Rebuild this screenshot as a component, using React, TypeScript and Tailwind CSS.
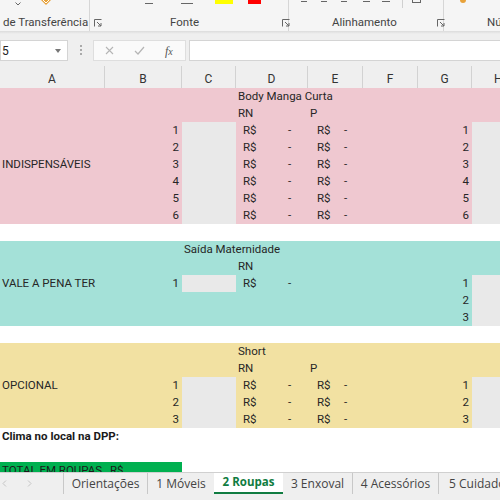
import type { ReactNode } from "react";

type Cell = { t?: ReactNode; right?: boolean; gray?: boolean };
type RowDef = Record<number, Cell>;

const cols = "grid grid-cols-[105px_77px_54px_72px_55px_55px_54px_1fr]";
const font = { fontFamily: "Roboto, 'Liberation Sans', sans-serif" };

function MoneyD() {
  return (
    <span className="flex pl-[5px]">
      <span className="w-[45px]">R$</span>
      <span>-</span>
    </span>
  );
}

function MoneyE() {
  return (
    <span className="flex pl-[7px]">
      <span className="w-[27px]">R$</span>
      <span>-</span>
    </span>
  );
}

function SheetRow({ row, bg }: { row: RowDef; bg: string }) {
  return (
    <div className={`${cols} h-[17px] ${bg}`}>
      {Array.from({ length: 8 }).map((_, i) => {
        const c = row[i] ?? {};
        return (
          <div
            key={i}
            className={`flex h-[17px] items-center whitespace-nowrap text-[11.5px] leading-none text-[#262626] ${
              c.right ? "justify-end pr-[3px]" : "pl-[2px]"
            } ${c.gray ? "bg-[#e9e9e9]" : ""}`}
          >
            {c.t}
          </div>
        );
      })}
    </div>
  );
}

function itemRow(n: number, label?: string, withE = true): RowDef {
  return {
    0: { t: label },
    1: { t: n, right: true },
    2: { gray: true },
    3: { t: <MoneyD /> },
    4: withE ? { t: <MoneyE /> } : {},
    6: { t: n, right: true },
    7: { gray: true },
  };
}

const pink: RowDef[] = [
  { 3: { t: "Body Manga Curta" } },
  { 3: { t: "RN" }, 4: { t: "P" } },
  itemRow(1),
  itemRow(2),
  itemRow(3, "INDISPENSÁVEIS"),
  itemRow(4),
  itemRow(5),
  itemRow(6),
];

const teal: RowDef[] = [
  { 2: { t: "Saída Maternidade" } },
  { 3: { t: "RN" } },
  itemRow(1, "VALE A PENA TER", false),
  { 6: { t: 2, right: true }, 7: { gray: true } },
  { 6: { t: 3, right: true }, 7: { gray: true } },
];

const yellow: RowDef[] = [
  { 3: { t: "Short" } },
  { 3: { t: "RN" }, 4: { t: "P" } },
  itemRow(1, "OPCIONAL"),
  itemRow(2),
  itemRow(3),
];

function Launcher() {
  return (
    <svg width="8" height="8" viewBox="0 0 8 8" className="text-[#666]">
      <path d="M0.5 7.5V0.5H7.5" fill="none" stroke="currentColor" strokeWidth="1" />
      <path d="M3 3L7 7M7 4V7H4" fill="none" stroke="currentColor" strokeWidth="1" />
    </svg>
  );
}

function Ribbon() {
  return (
    <div className="h-[31px] overflow-hidden bg-[#f5f5f5]" style={font}>
      <div className="flex h-full">
        <div className="flex w-[90px] shrink-0 flex-col border-r border-[#d6d6d6]">
          <div className="flex h-[18px] items-start">
            <svg width="6" height="4" viewBox="0 0 6 4" className="ml-[15px] mt-[2px]">
              <path d="M0.5 0.5L3 3L5.5 0.5" fill="none" stroke="#666" />
            </svg>
            <svg width="12" height="7" viewBox="0 0 12 7" className="ml-[19px]">
              <path d="M1 0L6 5L11 0Z" fill="#e8a23a" />
              <path d="M3 0L6 3L9 0" fill="none" stroke="#fff" strokeWidth="1" />
            </svg>
          </div>
          <div className="flex items-center whitespace-nowrap pl-[3px] text-[11.5px] text-[#444]">
            <span>de Transferência</span>
            <span className="ml-[6px] mt-[2px]">
              <Launcher />
            </span>
          </div>
        </div>
        <div className="flex w-[199px] shrink-0 flex-col border-r border-[#d6d6d6]">
          <div className="flex h-[18px] items-start">
            <div className="ml-[55px] mt-[3px] h-px w-[8px] bg-[#666]" />
            <div className="ml-[28px] mt-[3px] h-px w-[12px] bg-[#666]" />
            <div className="ml-[22px] h-[4px] w-[18px] bg-[#ffff00]" />
            <div className="ml-[15px] h-[4px] w-[13px] bg-[#ff0000]" />
          </div>
          <div className="flex items-center text-[11.5px] text-[#444]">
            <span className="ml-[80px]">Fonte</span>
            <span className="ml-[83px] mt-[2px]">
              <Launcher />
            </span>
          </div>
        </div>
        <div className="flex w-[155px] shrink-0 flex-col border-r border-[#d6d6d6]">
          <div className="flex h-[18px] items-start">
            <div className="ml-[12px] mt-[1px] h-px w-[6px] bg-[#666]" />
            <div className="ml-[14px] mt-[1px] h-px w-[6px] bg-[#666]" />
            <div className="ml-[14px] mt-[1px] h-px w-[6px] bg-[#666]" />
            <div className="ml-[16px] mt-[1px] h-px w-[7px] bg-[#666]" />
            <div className="ml-[12px] mt-[1px] h-px w-[8px] bg-[#666]" />
            <div className="ml-[12px] h-[8px] w-px bg-[#d0d0d0]" />
            <div className="ml-[9px] h-[3px] w-[9px] border border-t-0 border-[#666]" />
          </div>
          <div className="flex items-center text-[11.5px] text-[#444]">
            <span className="ml-[43px]">Alinhamento</span>
            <span className="ml-[40px] mt-[2px]">
              <Launcher />
            </span>
          </div>
        </div>
        <div className="flex flex-1 flex-col">
          <div className="flex h-[18px] items-start">
            <div className="ml-[16px] h-[3px] w-[6px] rounded-b-sm bg-[#e8a23a]" />
          </div>
          <div className="whitespace-nowrap pl-[43px] text-[11.5px] text-[#444]">Nú</div>
        </div>
      </div>
    </div>
  );
}

function FormulaBar() {
  return (
    <div className="flex h-[32px] items-start bg-[#efefef] pt-[6px]" style={font}>
      <div className="flex h-[21px] w-[68px] items-center justify-between border border-[#d4d4d4] bg-white pl-[1px] pr-[6px] text-[12px] text-[#222]">
        <span>5</span>
        <svg width="6" height="4" viewBox="0 0 6 4">
          <path d="M0 0H6L3 4Z" fill="#777" />
        </svg>
      </div>
      <div className="ml-[12px] mt-[5px] flex flex-col gap-[2px]">
        <div className="h-[2px] w-[2px] bg-[#aaa]" />
        <div className="h-[2px] w-[2px] bg-[#aaa]" />
        <div className="h-[2px] w-[2px] bg-[#aaa]" />
      </div>
      <div className="ml-[11px] flex h-[21px] w-[93px] items-center border border-[#dedede] bg-[#fafafa] text-[#aaa]">
        <svg width="9" height="9" viewBox="0 0 9 9" className="ml-[11px]">
          <path d="M1 1L8 8M8 1L1 8" stroke="#b5b5b5" strokeWidth="1.1" />
        </svg>
        <svg width="11" height="9" viewBox="0 0 11 9" className="ml-[20px]">
          <path d="M1 5L4 8L10 1" fill="none" stroke="#b5b5b5" strokeWidth="1.2" />
        </svg>
        <span
          className="ml-[20px] text-[12px] italic text-[#555]"
          style={{ fontFamily: "'Liberation Serif', serif" }}
        >
          f<span className="text-[10px]">x</span>
        </span>
      </div>
      <div className="ml-[3px] h-[21px] flex-1 border border-r-0 border-[#d4d4d4] bg-white" />
    </div>
  );
}

function Headers() {
  const labels = ["A", "B", "C", "D", "E", "F", "G", "H"];
  return (
    <div className={`${cols} h-[22px] bg-[#efefef]`} style={font}>
      {labels.map((l, i) => (
        <div
          key={l}
          className={`flex items-center text-[12px] text-[#333] ${
            i < 7 ? "justify-center border-r border-[#d2d2d2]" : "justify-start pl-[22px]"
          }`}
        >
          <span className="mt-[4px]">{l}</span>
        </div>
      ))}
    </div>
  );
}

function Tabs() {
  const tabs = ["Orientações", "1 Móveis", "2 Roupas", "3 Enxoval", "4 Acessórios", "5 Cuidados"];
  const widths = ["w-[84px]", "w-[66px]", "w-[69px]", "w-[70px]", "w-[86px]", "w-[80px]"];
  return (
    <div
      className="flex h-[28px] shrink-0 overflow-hidden border-t border-[#d0d0d0] bg-[#efefef] text-[12px]"
      style={{ fontFamily: "'Open Sans', 'Liberation Sans', sans-serif" }}
    >
      <div className="flex h-[21px] w-[64px] shrink-0 items-center border-r border-[#c8c8c8]">
        <svg width="5" height="7" viewBox="0 0 5 7" className="ml-[2px]">
          <path d="M4 0.5L1 3.5L4 6.5" fill="none" stroke="#c4c4c4" />
        </svg>
        <svg width="5" height="7" viewBox="0 0 5 7" className="ml-[20px]">
          <path d="M1 0.5L4 3.5L1 6.5" fill="none" stroke="#c4c4c4" />
        </svg>
      </div>
      {tabs.map((t, i) =>
        i === 2 ? (
          <div
            key={t}
            className={`${widths[i]} -mt-px flex h-[22px] shrink-0 items-center justify-center whitespace-nowrap border-b-2 border-[#107c41] bg-white text-[11.5px] font-bold text-[#107c41]`}
          >
            {t}
          </div>
        ) : (
          <div
            key={t}
            className={`${widths[i]} flex h-[21px] shrink-0 items-center whitespace-nowrap text-[#444] ${
              i === 0 || i === 3 || i === 4 ? "border-r border-[#c8c8c8]" : ""
            } ${i === 5 ? "justify-start pl-[10px]" : "justify-center"}`}
          >
            {t}
          </div>
        ),
      )}
    </div>
  );
}

export default function App() {
  return (
    <div className="flex h-[500px] w-[500px] flex-col overflow-hidden bg-white">
      <Ribbon />
      <div className="h-[3px] bg-gradient-to-b from-[#dcdcdc] to-[#efefef]" />
      <FormulaBar />
      <Headers />
      <div className="flex-1 overflow-hidden" style={font}>
        {pink.map((r, i) => (
          <SheetRow key={`p${i}`} row={r} bg="bg-[#efc8d0]" />
        ))}
        <div className="h-[17px]" />
        {teal.map((r, i) => (
          <SheetRow key={`t${i}`} row={r} bg="bg-[#a4e1d8]" />
        ))}
        <div className="h-[17px]" />
        {yellow.map((r, i) => (
          <SheetRow key={`y${i}`} row={r} bg="bg-[#f2e1a2]" />
        ))}
        <div className="flex h-[17px] items-center pl-[2px] text-[11.5px] font-bold text-[#1a1a1a]">
          Clima no local na DPP:
        </div>
        <div className="h-[17px]" />
        <div className="flex h-[17px] w-[182px] items-center bg-[#00b050] text-[11.5px] text-[#1a1a1a]">
          <span className="w-[110px] pl-[2px]">TOTAL EM ROUPAS</span>
          <span>R$</span>
        </div>
      </div>
      <Tabs />
    </div>
  );
}
